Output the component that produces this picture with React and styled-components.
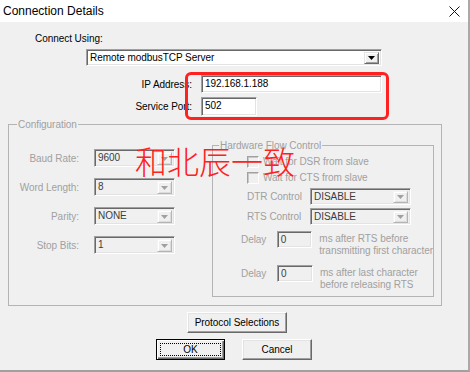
import styled, { createGlobalStyle } from "styled-components";

const GlobalStyle = createGlobalStyle`
  html, body {
    margin: 0;
    padding: 0;
    background: #d6d6d6;
  }
  body {
    font-family: "Liberation Sans", Arial, sans-serif;
    font-size: 10px;
    letter-spacing: -0.05px;
    color: #000;
  }
`;

const Window = styled.div`
  width: 470px;
  box-sizing: border-box;
  background: #f0f0f0;
  border-right: 2px solid #a9a9a9;
  border-bottom: 2px solid #a0a0a0;
`;

const TitleBar = styled.div`
  height: 22px;
  background: #fff;
  display: flex;
  align-items: center;
  justify-content: space-between;
  padding: 0 8px 0 3px;
  font-size: 12px;
  letter-spacing: 0;
  color: #000;
`;

const Body = styled.div`
  position: relative;
  display: flex;
  flex-direction: column;
  padding: 10px 0 10px;
`;

const ConnectLabel = styled.div`
  margin-left: 35px;
  line-height: 13px;
`;

const Sunken = styled.div`
  display: flex;
  align-items: stretch;
  box-sizing: border-box;
  width: ${(p) => p.$w}px;
  height: ${(p) => p.$h || 17}px;
  background: ${(p) => (p.$disabled ? "#f0f0f0" : "#fff")};
  border: 1px solid;
  border-color: #a0a0a0 #fff #fff #a0a0a0;
  box-shadow: inset 1px 1px 0 #696969, inset -1px -1px 0 #e3e3e3;
  padding: 2px 2px 1px 2px;
`;

const FieldText = styled.span`
  flex: 1;
  line-height: 12px;
  padding-left: 1px;
  white-space: nowrap;
  color: ${(p) => (p.$disabled ? "#3c3c3c" : "#000")};
`;

const ArrowBtn = styled.span`
  width: 15px;
  box-sizing: border-box;
  display: flex;
  align-items: center;
  justify-content: center;
  background: #f0f0f0;
  border: 1px solid;
  border-color: #e3e3e3 #696969 #696969 #e3e3e3;
  box-shadow: inset 1px 1px 0 #fff, inset -1px -1px 0 #a0a0a0;
  ${(p) =>
    p.$disabled &&
    `border-color: #f4f4f4 #b5b5b5 #b5b5b5 #f4f4f4; box-shadow: inset 1px 1px 0 #fff, inset -1px -1px 0 #dcdcdc;`}
`;

const Combo = ({ w, h, value, disabled }) => (
  <Sunken $w={w} $h={h} $disabled={disabled}>
    <FieldText $disabled={disabled}>{value}</FieldText>
    <ArrowBtn $disabled={disabled}>
      <svg width="7" height="4" viewBox="0 0 7 4">
        <polygon points="0,0 7,0 3.5,4" fill={disabled ? "#a0a0a0" : "#000"} />
      </svg>
    </ArrowBtn>
  </Sunken>
);

const MainSelect = styled.div`
  margin: 4px 0 0 86px;
`;

const AddrRow = styled.div`
  display: grid;
  grid-template-columns: 192px auto;
  column-gap: 9px;
  align-items: center;
  margin-top: ${(p) => p.$mt}px;
`;

const RightLabel = styled.span`
  text-align: right;
  white-space: nowrap;
  color: ${(p) => (p.$disabled ? "#a0a0a0" : "#000")};
`;

const Group = styled.fieldset`
  box-sizing: border-box;
  min-width: 0;
  display: flex;
  margin: ${(p) => p.$margin};
  width: ${(p) => p.$w}px;
  padding: ${(p) => p.$pad};
  border: 1px solid #b4b4b4;
  flex-direction: ${(p) => p.$dir || "row"};
`;

const Legend = styled.legend`
  margin-left: ${(p) => p.$ml}px;
  padding: 0 1px;
  line-height: 13px;
  color: #a0a0a0;
`;

const SerialGrid = styled.div`
  display: grid;
  grid-template-columns: 70px 81px;
  column-gap: 15px;
  row-gap: 11px;
  align-content: start;
  align-items: center;
  margin-top: 10px;
`;

const CheckRow = styled.div`
  display: flex;
  align-items: center;
  gap: 4px;
  height: 13px;
  margin: ${(p) => p.$mt}px 0 0 34px;
  color: #a0a0a0;
  white-space: nowrap;
`;

const CheckBox = styled.span`
  width: 12px;
  height: 12px;
  box-sizing: border-box;
  background: #f0f0f0;
  border: 1px solid;
  border-color: #a0a0a0 #fff #fff #a0a0a0;
  box-shadow: inset 1px 1px 0 #c8c8c8;
`;

const CtrlRow = styled.div`
  display: grid;
  grid-template-columns: 63px 101px;
  align-items: center;
  margin: ${(p) => p.$mt}px 0 0 34px;
  color: #a0a0a0;
`;

const DelayRow = styled.div`
  display: flex;
  align-items: flex-start;
  margin: ${(p) => p.$mt}px 0 0 28px;
  color: #a0a0a0;
`;

const DelayLabel = styled.span`
  width: 36px;
  line-height: 17px;
`;

const Note = styled.div`
  margin: 2px 0 0 7px;
  line-height: 12px;
  white-space: nowrap;
`;

const ButtonRow = styled.div`
  display: flex;
  justify-content: center;
  gap: 17px;
  margin-top: 6px;
  padding-left: ${(p) => p.$shift || 0}px;
`;

const Button = styled.div`
  box-sizing: border-box;
  width: ${(p) => p.$w}px;
  height: 21px;
  display: flex;
  align-items: center;
  justify-content: center;
  background: #f0f0f0;
  white-space: nowrap;
  border: 1px solid;
  border-color: #fff #696969 #696969 #fff;
  box-shadow: inset -1px -1px 0 #a0a0a0, inset 1px 1px 0 #e3e3e3;
  ${(p) =>
    p.$default &&
    `border: 1px solid #000;
     box-shadow: inset 1px 1px 0 #fff, inset -1px -1px 0 #696969, inset -2px -2px 0 #a0a0a0;
     outline: 1px dotted #000;
     outline-offset: -5px;`}
`;

const HighlightBox = styled.div`
  position: absolute;
  left: 185px;
  top: 50px;
  width: 204px;
  height: 48px;
  box-sizing: border-box;
  border: 3px solid #ff2020;
  border-radius: 6px;
  pointer-events: none;
`;

const Annotation = styled.div`
  position: absolute;
  left: 135px;
  top: 122px;
  font-family: "Noto Sans CJK SC", sans-serif;
  font-size: 32px;
  font-weight: 300;
  line-height: 32px;
  letter-spacing: 0;
  color: #ff2020;
  white-space: nowrap;
`;

const serialRows = [
  ["Baud Rate:", "9600"],
  ["Word Length:", "8"],
  ["Parity:", "NONE"],
  ["Stop Bits:", "1"],
];

export default function App() {
  return (
    <>
      <GlobalStyle />
      <Window>
        <TitleBar>
          <span>Connection Details</span>
          <svg width="11" height="11" viewBox="0 0 11 11">
            <path d="M0.5 0.5 L10.5 10.5 M10.5 0.5 L0.5 10.5" stroke="#111" strokeWidth="1" />
          </svg>
        </TitleBar>
        <Body>
          <ConnectLabel>Connect Using:</ConnectLabel>
          <MainSelect>
            <Combo w={296} h={17} value="Remote modbusTCP Server" />
          </MainSelect>
          <AddrRow $mt={9}>
            <RightLabel>IP Address:</RightLabel>
            <Sunken $w={181} $h={18}>
              <FieldText>192.168.1.188</FieldText>
            </Sunken>
          </AddrRow>
          <AddrRow $mt={4}>
            <RightLabel>Service Port:</RightLabel>
            <Sunken $w={56} $h={19}>
              <FieldText>502</FieldText>
            </Sunken>
          </AddrRow>

          <Group $margin="2px 0 0 8px" $w={434} $pad="8px 7px 8px 0">
            <Legend $ml={8}>Configuration</Legend>
            <SerialGrid>
              {serialRows.map(([label, value]) => [
                <RightLabel key={label} $disabled>
                  {label}
                </RightLabel>,
                <Combo key={label + "c"} w={81} h={18} value={value} disabled />,
              ])}
            </SerialGrid>

            <Group $margin="0 0 0 auto" $w={222} $pad="3px 0 5px 0" $dir="column">
              <Legend $ml={6}>Hardware Flow Control</Legend>
              <CheckRow $mt={0}>
                <CheckBox />
                <span>Wait for DSR from slave</span>
              </CheckRow>
              <CheckRow $mt={3}>
                <CheckBox />
                <span>Wait for CTS from slave</span>
              </CheckRow>
              <CtrlRow $mt={4}>
                <span>DTR Control</span>
                <Combo w={101} h={17} value="DISABLE" disabled />
              </CtrlRow>
              <CtrlRow $mt={3}>
                <span>RTS Control</span>
                <Combo w={101} h={17} value="DISABLE" disabled />
              </CtrlRow>
              <DelayRow $mt={6}>
                <DelayLabel>Delay</DelayLabel>
                <Sunken $w={36} $h={17} $disabled>
                  <FieldText $disabled>0</FieldText>
                </Sunken>
                <Note>
                  ms after RTS before
                  <br />
                  transmitting first character
                </Note>
              </DelayRow>
              <DelayRow $mt={8}>
                <DelayLabel>Delay</DelayLabel>
                <Sunken $w={36} $h={17} $disabled>
                  <FieldText $disabled>0</FieldText>
                </Sunken>
                <Note>
                  ms after last character
                  <br />
                  before releasing RTS
                </Note>
              </DelayRow>
            </Group>
          </Group>

          <ButtonRow $shift={6}>
            <Button $w={100}>Protocol Selections</Button>
          </ButtonRow>
          <ButtonRow>
            <Button $w={69} $default>
              OK
            </Button>
            <Button $w={70}>Cancel</Button>
          </ButtonRow>

          <HighlightBox />
          <Annotation>和北辰一致</Annotation>
        </Body>
      </Window>
    </>
  );
}
